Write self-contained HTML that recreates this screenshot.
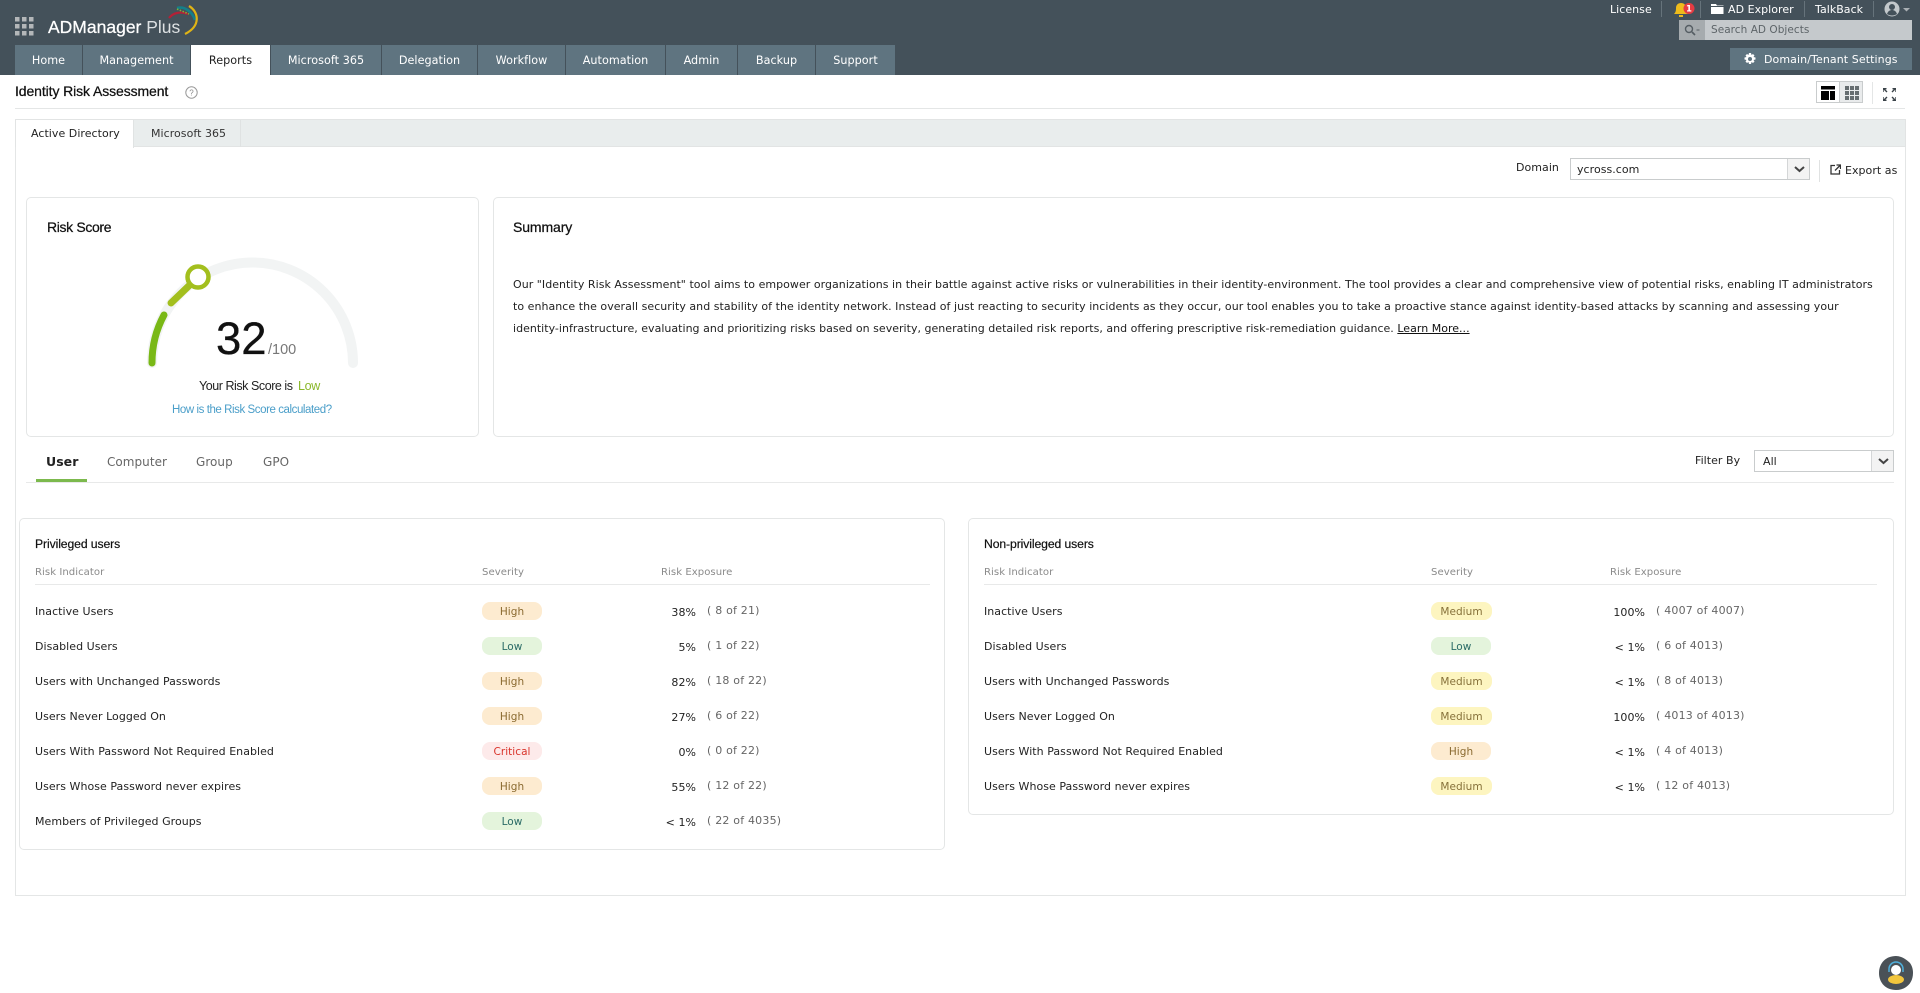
<!DOCTYPE html>
<html lang="en"><head><meta charset="utf-8"><title>Identity Risk Assessment</title>
<style>
html,body{margin:0;padding:0;width:1920px;height:993px;overflow:hidden;background:#fff}
body{position:relative;font-family:"DejaVu Sans","Liberation Sans",sans-serif;font-size:11px;color:#222;letter-spacing:.04px}
.a,.t{position:absolute;white-space:nowrap}
.t{line-height:16px;height:16px;margin-top:1px}
.l,.ttl{margin-top:0;letter-spacing:0}
.l{font-family:"Liberation Sans",sans-serif}
.b{position:absolute;box-sizing:border-box}
.tab{position:absolute;top:45px;height:30px;background:#5f7480;color:#fff;text-align:center;line-height:32px;font-size:11.2px}
.card{position:absolute;box-sizing:border-box;border:1px solid #e4e6e6;border-radius:5px;background:#fff}
.sel{position:absolute;box-sizing:border-box;border:1px solid #c9cccd;background:#fff}
.arr{position:absolute;right:0;top:0;bottom:0;width:21px;background:#f3f3f3;border-left:1px solid #d4d6d7}
.p{position:absolute;height:18px;line-height:20px;border-radius:8px;text-align:center;font-size:10.5px}
.hi{background:#fdebd0;color:#8a6a30}.lo{background:#e4f4dc;color:#2a6b66}.cr{background:#fdeaea;color:#d9342b}.me{background:#fdf5c0;color:#86713a}
.h{color:#8a8a8a;font-size:10.1px}
.x{color:#666;letter-spacing:.2px}
.ttl{position:absolute;white-space:nowrap;line-height:16px;height:16px;font-family:"Liberation Sans",sans-serif;color:#111;font-size:14px;-webkit-text-stroke:.25px #111}
.sm{font-size:12.2px;-webkit-text-stroke:.2px #111;letter-spacing:-.1px}
.pct{text-align:right;width:60px}
</style></head><body>
<!-- header -->
<div class="b" style="left:0;top:0;width:1920px;height:75px;background:#44515a"></div>
<svg class="a" style="left:15px;top:17px" width="19" height="19"><g fill="#b4b7b9"><rect width="4.5" height="4.5"/><rect x="7" width="4.5" height="4.5"/><rect x="14" width="4.5" height="4.5"/><rect y="7" width="4.5" height="4.5"/><rect x="7" y="7" width="4.5" height="4.5"/><rect x="14" y="7" width="4.5" height="4.5"/><rect y="14" width="4.5" height="4.5"/><rect x="7" y="14" width="4.5" height="4.5"/><rect x="14" y="14" width="4.5" height="4.5"/></g></svg>
<div class="a l" style="left:48px;top:16px;line-height:22px;font-size:17.5px;color:#fff;-webkit-text-stroke:.25px #fff">ADManager <span style="color:#dde1e3;-webkit-text-stroke:0">Plus</span></div>
<svg class="a" style="left:165px;top:2px" width="40" height="36" fill="none"><path d="M4 16C8 11 15 9 23 12" stroke="#b32036" stroke-width="2.2"/><path d="M12 6C19 4 27 9 30 18" stroke="#14808a" stroke-width="2.6"/><path d="M24 4C34 10 36 24 20 32" stroke="#e0b415" stroke-width="2.2"/><path d="M12 7l12 5" stroke="#7ab53a" stroke-width="1.6" stroke-dasharray="1.5 1.5"/></svg>
<div class="tab" style="left:15px;width:67px">Home</div>
<div class="tab" style="left:83px;width:107px">Management</div>
<div class="tab" style="left:191px;width:79px;background:#fff;color:#222">Reports</div>
<div class="tab" style="left:271px;width:110px">Microsoft 365</div>
<div class="tab" style="left:382px;width:95px">Delegation</div>
<div class="tab" style="left:478px;width:87px">Workflow</div>
<div class="tab" style="left:566px;width:99px">Automation</div>
<div class="tab" style="left:666px;width:71px">Admin</div>
<div class="tab" style="left:738px;width:77px">Backup</div>
<div class="tab" style="left:816px;width:79px">Support</div>
<!-- top right -->
<div class="t" style="left:1610px;top:1px;color:#fff">License</div>
<div class="b" style="left:1661px;top:1px;width:1px;height:16px;background:#66737b"></div>
<svg class="a" style="left:1673px;top:2px" width="24" height="15"><path d="M1 12c2-2 2-4 2-6 0-3 2-5 5-5s5 2 5 5c0 2 0 4 2 6z" fill="#eebb1c"/><rect x="6" y="13" width="4" height="2" fill="#eebb1c"/><circle cx="16" cy="6.5" r="5.5" fill="#e53b42"/><text x="16" y="9.5" font-size="8.5" font-weight="bold" fill="#fff" text-anchor="middle" font-family="DejaVu Sans">1</text></svg>
<div class="b" style="left:1700px;top:1px;width:1px;height:17px;background:#66737b"></div>
<svg class="a" style="left:1711px;top:4px" width="13" height="10"><path d="M0 0h5l1 1.5h6.5V10H0z" fill="#fff"/><rect y="2" width="13" height="1" fill="#44515a"/></svg>
<div class="t" style="left:1728px;top:1px;color:#fff">AD Explorer</div>
<div class="b" style="left:1804px;top:1px;width:1px;height:16px;background:#66737b"></div>
<div class="t" style="left:1815px;top:1px;color:#fff">TalkBack</div>
<div class="b" style="left:1873px;top:1px;width:1px;height:16px;background:#66737b"></div>
<svg class="a" style="left:1884px;top:1px" width="32" height="16"><circle cx="8" cy="8" r="7.5" fill="#c3c8cb"/><circle cx="8" cy="6" r="3" fill="#44515a"/><path d="M3 13c1-3 3-4 5-4s4 1 5 4c-3 2-7 2-10 0z" fill="#44515a"/><path d="M19 7h7l-3.5 3.5z" fill="#aab0b4"/></svg>
<div class="b" style="left:1679px;top:20px;width:233px;height:20px;background:#c5c9cc"></div>
<div class="b" style="left:1679px;top:20px;width:26px;height:20px;background:#a6abae"></div>
<svg class="a" style="left:1684px;top:24px" width="18" height="12" fill="none"><circle cx="5" cy="5" r="3.5" stroke="#555d63" stroke-width="1.4"/><path d="M8 8l3 3" stroke="#555d63" stroke-width="1.6"/><path d="M12.5 6h3" stroke="#555d63"/></svg>
<div class="t" style="left:1711px;top:21px;color:#5d6468;font-size:10.5px">Search AD Objects</div>
<div class="b" style="left:1730px;top:48px;width:182px;height:22px;background:#5f7480"></div>
<svg class="a" style="left:1744px;top:53px" width="12" height="12" viewBox="0 0 24 24"><path fill="#fff" d="M10 0h4l1 4 3-2 3 3-2 3 4 1v4l-4 1 2 3-3 3-3-2-1 4h-4l-1-4-3 2-3-3 2-3-4-1v-4l4-1-2-3 3-3 3 2zM12 8a4 4 0 1 0 0 8 4 4 0 0 0 0-8z"/></svg>
<div class="t" style="left:1764px;top:51px;color:#fff;letter-spacing:.09px">Domain/Tenant Settings</div>
<!-- title row -->
<div class="ttl" style="left:15px;top:83px;letter-spacing:-.1px">Identity Risk Assessment</div>
<svg class="a" style="left:185px;top:86px" width="13" height="13" fill="none"><circle cx="6.5" cy="6.5" r="5.7" stroke="#999"/><text x="6.5" y="9.5" font-size="8" fill="#888" text-anchor="middle" font-family="Liberation Sans">?</text></svg>
<div class="b" style="left:1816px;top:81px;width:47px;height:22px;border:1px solid #c9cccd;background:#e9ebec"></div>
<div class="b" style="left:1817px;top:82px;width:23px;height:20px;background:#fff;border-right:1px solid #c9cccd"></div>
<svg class="a" style="left:1821px;top:86px" width="14" height="14"><path d="M0 0h14v3.5H0zM0 5h8v9H0zM9 5h5v9H9z" fill="#000"/></svg>
<svg class="a" style="left:1845px;top:86px" width="14" height="14"><g fill="#666d70"><rect width="4" height="4"/><rect x="5" width="4" height="4"/><rect x="10" width="4" height="4"/><rect y="5" width="4" height="4"/><rect x="5" y="5" width="4" height="4"/><rect x="10" y="5" width="4" height="4"/><rect y="10" width="4" height="4"/><rect x="5" y="10" width="4" height="4"/><rect x="10" y="10" width="4" height="4"/></g></svg>
<div class="b" style="left:1872px;top:82px;width:1px;height:22px;background:#e4e6e6"></div>
<svg class="a" style="left:1883px;top:88px" width="13" height="13" fill="none" stroke="#3a4248" stroke-width="1.4"><path d="M0 4V.7h3.5M1 1l3 3M9.500 .7H13V4M12 1L9 4M0 9v3.300h3.500M1 12l3-3M9.500 12.300H13V9M12 12L9 9"/></svg>
<div class="b" style="left:15px;top:108px;width:1890px;height:1px;background:#e4e6e6"></div>
<!-- container -->
<div class="b" style="left:15px;top:119px;width:1891px;height:777px;border:1px solid #e4e6e6"></div>
<div class="b" style="left:15px;top:119px;width:1891px;height:28px;background:#e9eded;border:1px solid #e2e4e4"></div>
<div class="b" style="left:16px;top:120px;width:118px;height:28px;background:#fff;border-right:1px solid #e0e3e3"></div>
<div class="b" style="left:240px;top:120px;width:1px;height:27px;background:#dfe2e2"></div>
<div class="t" style="left:31px;top:125px;color:#222;font-size:11px">Active Directory</div>
<div class="t" style="left:151px;top:125px;color:#333">Microsoft 365</div>
<!-- domain -->
<div class="t" style="left:1516px;top:159px">Domain</div>
<div class="sel" style="left:1570px;top:158px;width:240px;height:22px"><div class="arr"></div></div>
<div class="t" style="left:1577px;top:161px">ycross.com</div>
<svg class="a" style="left:1794px;top:166px" width="11" height="7" fill="none"><path d="M1 1l4.500 4L10 1" stroke="#444" stroke-width="2"/></svg>
<div class="b" style="left:1819px;top:160px;width:1px;height:22px;background:#e0e2e2"></div>
<svg class="a" style="left:1830px;top:164px" width="11" height="11" fill="none" stroke="#333" stroke-width="1.300"><path d="M5 1.500H1v8.500h8.500V6M5 6.500L10 1.500M6.500 1H10.500V5"/></svg>
<div class="t" style="left:1845px;top:162px">Export as</div>
<!-- risk card -->
<div class="card" style="left:26px;top:197px;width:453px;height:240px"></div>
<div class="ttl" style="left:47px;top:219px;letter-spacing:-.35px">Risk Score</div>
<svg class="a" style="left:130px;top:240px" width="250" height="140" fill="none">
<path d="M22 123A100.500 100.500 0 0 1 223 123" stroke="#f2f4f4" stroke-width="10" stroke-linecap="round"/>
<path d="M22 123A100.500 100.500 0 0 1 34 75" stroke="#79b816" stroke-width="7" stroke-linecap="round"/>
<path d="M41 63L66 39" stroke="#a3bf1e" stroke-width="7" stroke-linecap="round"/>
<circle cx="68" cy="37" r="10.500" fill="#fff" stroke="#a3bf1e" stroke-width="4.500"/>
</svg>
<div class="a l" style="left:216px;top:316px;font-size:45.5px;line-height:46px;color:#111;-webkit-text-stroke:.3px #111">32</div>
<div class="a l" style="left:268px;top:342px;font-size:14.5px;line-height:16px;color:#777">/100</div>
<div class="t l" style="left:199px;top:378px;font-size:12.5px;color:#222;letter-spacing:-.45px">Your Risk Score is</div>
<div class="t l" style="left:298px;top:378px;font-size:12.5px;color:#8ab82a;letter-spacing:-.3px">Low</div>
<div class="t l" style="left:172px;top:402px;font-size:11.5px;color:#4a9ec9;letter-spacing:-.43px">How is the Risk Score calculated?</div>
<!-- summary -->
<div class="card" style="left:493px;top:197px;width:1401px;height:240px"></div>
<div class="ttl" style="left:513px;top:219px;letter-spacing:-.1px">Summary</div>
<div class="t" style="left:513px;top:276px;color:#222;letter-spacing:.04px">Our "Identity Risk Assessment" tool aims to empower organizations in their battle against active risks or vulnerabilities in their identity-environment. The tool provides a clear and comprehensive view of potential risks, enabling IT administrators</div>
<div class="t" style="left:513px;top:298px;color:#222;letter-spacing:.04px">to enhance the overall security and stability of the identity network. Instead of just reacting to security incidents as they occur, our tool enables you to take a proactive stance against identity-based attacks by scanning and assessing your</div>
<div class="t" style="left:513px;top:320px;color:#222;letter-spacing:.018px">identity-infrastructure, evaluating and prioritizing risks based on severity, generating detailed risk reports, and offering prescriptive risk-remediation guidance. <span style="text-decoration:underline;color:#111">Learn More...</span></div>
<!-- subtabs -->
<div class="t" style="left:46px;top:453px;font-size:12.5px;font-weight:bold;color:#222">User</div>
<div class="t" style="left:107px;top:453px;font-size:12px;color:#666">Computer</div>
<div class="t" style="left:196px;top:453px;font-size:12px;color:#666">Group</div>
<div class="t" style="left:263px;top:453px;font-size:12px;color:#666">GPO</div>
<div class="b" style="left:36px;top:479px;width:51px;height:3px;background:#7cb94d"></div>
<div class="b" style="left:26px;top:482px;width:1868px;height:1px;background:#e8e9e9"></div>
<div class="t" style="left:1695px;top:452px">Filter By</div>
<div class="sel" style="left:1754px;top:450px;width:140px;height:22px"><div class="arr"></div></div>
<div class="t" style="left:1763px;top:453px">All</div>
<svg class="a" style="left:1878px;top:458px" width="11" height="7" fill="none"><path d="M1 1l4.500 4L10 1" stroke="#444" stroke-width="2"/></svg>
<!-- left panel -->
<div class="card" style="left:19px;top:518px;width:926px;height:332px"></div>
<div class="ttl sm" style="left:35px;top:536px">Privileged users</div>
<div class="t h" style="left:35px;top:564px">Risk Indicator</div><div class="t h" style="left:482px;top:564px">Severity</div><div class="t h" style="left:661px;top:564px">Risk Exposure</div>
<div class="b" style="left:35px;top:584px;width:895px;height:1px;background:#e8e9e9"></div>

<div class="t" style="left:35px;top:603px">Inactive Users</div><div class="p hi" style="left:482px;top:602px;width:60px">High</div><div class="t pct" style="left:636px;top:604px">38%</div><div class="t x" style="left:707px;top:602px">( 8 of 21)</div>
<div class="t" style="left:35px;top:638px">Disabled Users</div><div class="p lo" style="left:482px;top:637px;width:60px">Low</div><div class="t pct" style="left:636px;top:639px">5%</div><div class="t x" style="left:707px;top:637px">( 1 of 22)</div>
<div class="t" style="left:35px;top:673px">Users with Unchanged Passwords</div><div class="p hi" style="left:482px;top:672px;width:60px">High</div><div class="t pct" style="left:636px;top:674px">82%</div><div class="t x" style="left:707px;top:672px">( 18 of 22)</div>
<div class="t" style="left:35px;top:708px">Users Never Logged On</div><div class="p hi" style="left:482px;top:707px;width:60px">High</div><div class="t pct" style="left:636px;top:709px">27%</div><div class="t x" style="left:707px;top:707px">( 6 of 22)</div>
<div class="t" style="left:35px;top:743px">Users With Password Not Required Enabled</div><div class="p cr" style="left:482px;top:742px;width:60px">Critical</div><div class="t pct" style="left:636px;top:744px">0%</div><div class="t x" style="left:707px;top:742px">( 0 of 22)</div>
<div class="t" style="left:35px;top:778px">Users Whose Password never expires</div><div class="p hi" style="left:482px;top:777px;width:60px">High</div><div class="t pct" style="left:636px;top:779px">55%</div><div class="t x" style="left:707px;top:777px">( 12 of 22)</div>
<div class="t" style="left:35px;top:813px">Members of Privileged Groups</div><div class="p lo" style="left:482px;top:812px;width:60px">Low</div><div class="t pct" style="left:636px;top:814px">&lt; 1%</div><div class="t x" style="left:707px;top:812px">( 22 of 4035)</div>
<!-- right panel -->
<div class="card" style="left:968px;top:518px;width:926px;height:297px"></div>
<div class="ttl sm" style="left:984px;top:536px">Non-privileged users</div>
<div class="t h" style="left:984px;top:564px">Risk Indicator</div><div class="t h" style="left:1431px;top:564px">Severity</div><div class="t h" style="left:1610px;top:564px">Risk Exposure</div>
<div class="b" style="left:984px;top:584px;width:893px;height:1px;background:#e8e9e9"></div>

<div class="t" style="left:984px;top:603px">Inactive Users</div><div class="p me" style="left:1431px;top:602px;width:61px">Medium</div><div class="t pct" style="left:1585px;top:604px">100%</div><div class="t x" style="left:1656px;top:602px">( 4007 of 4007)</div>
<div class="t" style="left:984px;top:638px">Disabled Users</div><div class="p lo" style="left:1431px;top:637px;width:60px">Low</div><div class="t pct" style="left:1585px;top:639px">&lt; 1%</div><div class="t x" style="left:1656px;top:637px">( 6 of 4013)</div>
<div class="t" style="left:984px;top:673px">Users with Unchanged Passwords</div><div class="p me" style="left:1431px;top:672px;width:61px">Medium</div><div class="t pct" style="left:1585px;top:674px">&lt; 1%</div><div class="t x" style="left:1656px;top:672px">( 8 of 4013)</div>
<div class="t" style="left:984px;top:708px">Users Never Logged On</div><div class="p me" style="left:1431px;top:707px;width:61px">Medium</div><div class="t pct" style="left:1585px;top:709px">100%</div><div class="t x" style="left:1656px;top:707px">( 4013 of 4013)</div>
<div class="t" style="left:984px;top:743px">Users With Password Not Required Enabled</div><div class="p hi" style="left:1431px;top:742px;width:60px">High</div><div class="t pct" style="left:1585px;top:744px">&lt; 1%</div><div class="t x" style="left:1656px;top:742px">( 4 of 4013)</div>
<div class="t" style="left:984px;top:778px">Users Whose Password never expires</div><div class="p me" style="left:1431px;top:777px;width:61px">Medium</div><div class="t pct" style="left:1585px;top:779px">&lt; 1%</div><div class="t x" style="left:1656px;top:777px">( 12 of 4013)</div>
<!-- chat -->
<svg class="a" style="left:1878px;top:955px" width="36" height="36"><path d="M18 1C8 1 1 8 1 18s7 17 17 17 17-7 17-17c0-4-1-7-3-10-4-4-9-7-14-7z" fill="#4a5157"/><path d="M11 17v-3a7 7 0 0 1 14 0v3" fill="none" stroke="#4fb0dc" stroke-width="1.500"/><circle cx="18" cy="15" r="5" fill="#fff"/><ellipse cx="18" cy="24.500" rx="8" ry="4.500" fill="#f2c63d"/></svg>
</body></html>
